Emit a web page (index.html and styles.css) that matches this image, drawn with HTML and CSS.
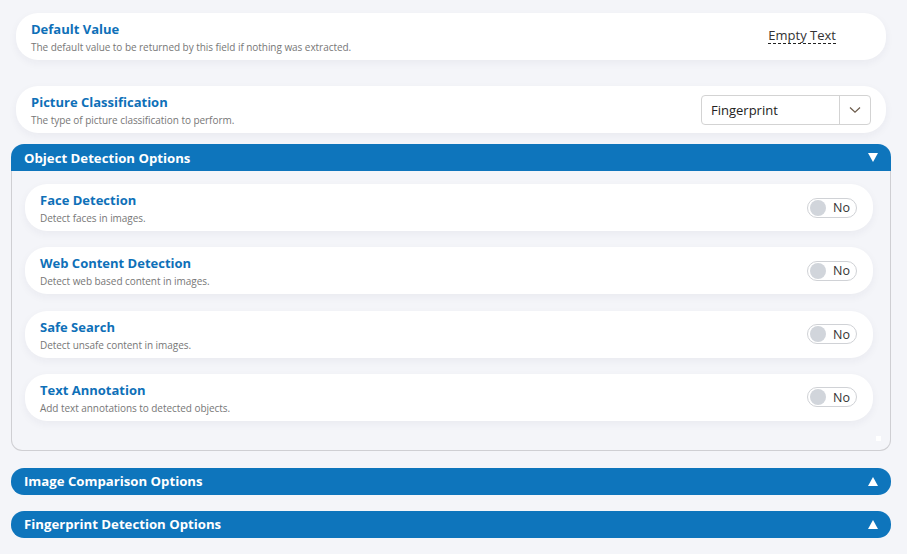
FILE: index.html
```html
<!DOCTYPE html>
<html>
<head>
<meta charset="utf-8">
<link rel="stylesheet" href="styles.css">
</head>
<body>
<div class="page">
  <div class="card top-card">
    <div class="info">
      <div class="title">Default Value</div>
      <div class="desc">The default value to be returned by this field if nothing was extracted.</div>
    </div>
    <div class="empty-text">Empty Text</div>
  </div>

  <div class="card second-card">
    <div class="info">
      <div class="title">Picture Classification</div>
      <div class="desc">The type of picture classification to perform.</div>
    </div>
    <div class="select">
      <span class="select-value">Fingerprint</span>
      <span class="select-btn">
        <svg width="12" height="8" viewBox="0 0 12 8"><path d="M1 1.5 L6 6.2 L11 1.5" fill="none" stroke="#6b5a4a" stroke-width="1.2"/></svg>
      </span>
    </div>
  </div>

  <div class="section open">
    <div class="section-head">
      <span>Object Detection Options</span>
      <span class="tri down"></span>
    </div>
    <div class="section-body">
      <div class="card inner">
        <div class="info">
          <div class="title">Face Detection</div>
          <div class="desc">Detect faces in images.</div>
        </div>
        <div class="toggle"><span class="knob"></span><span class="tlabel">No</span></div>
      </div>
      <div class="card inner">
        <div class="info">
          <div class="title">Web Content Detection</div>
          <div class="desc">Detect web based content in images.</div>
        </div>
        <div class="toggle"><span class="knob"></span><span class="tlabel">No</span></div>
      </div>
      <div class="card inner">
        <div class="info">
          <div class="title">Safe Search</div>
          <div class="desc">Detect unsafe content in images.</div>
        </div>
        <div class="toggle"><span class="knob"></span><span class="tlabel">No</span></div>
      </div>
      <div class="card inner">
        <div class="info">
          <div class="title">Text Annotation</div>
          <div class="desc">Add text annotations to detected objects.</div>
        </div>
        <div class="toggle"><span class="knob"></span><span class="tlabel">No</span></div>
      </div>
      <span class="resize-dot"></span>
    </div>
  </div>

  <div class="section closed first-closed">
    <div class="section-head">
      <span>Image Comparison Options</span>
      <span class="tri up"></span>
    </div>
  </div>

  <div class="section closed">
    <div class="section-head">
      <span>Fingerprint Detection Options</span>
      <span class="tri up"></span>
    </div>
  </div>
</div>
</body>
</html>
```

FILE: styles.css
```css
* { box-sizing: border-box; }
html, body {
  margin: 0;
  padding: 0;
  background: #f4f5f9;
  font-family: "Open Sans", "Noto Sans", "Liberation Sans", sans-serif;
}
.page {
  width: 907px;
  height: 554px;
  padding: 13px 16px 0 11px;
  display: flex;
  flex-direction: column;
  overflow: hidden;
}
.card {
  background: #ffffff;
  border-radius: 22px;
  height: 47px;
  display: flex;
  align-items: center;
  justify-content: space-between;
  box-shadow: 0 3px 8px rgba(30, 40, 80, 0.05);
}
.top-card, .second-card {
  margin: 0 5px;
  padding: 0 15px;
}
.second-card {
  margin-top: 26px;
}
.info {
  display: flex;
  flex-direction: column;
  padding-top: 2px;
}
.title {
  color: #0e70b8;
  font-weight: 700;
  font-size: 13px;
  line-height: 17px;
}
.desc {
  color: #777;
  font-size: 10px;
  line-height: 14px;
  margin-top: 2px;
  letter-spacing: -0.05px;
}
.empty-text {
  font-size: 13px;
  color: #333;
  border-bottom: 1px dashed #222;
  line-height: 16px;
  margin-right: 35px;
  margin-top: -3px;
}
.select {
  width: 170px;
  height: 30px;
  border: 1px solid #d3d3d3;
  border-radius: 4px;
  display: flex;
  align-items: stretch;
}
.select-value {
  flex: 1;
  font-size: 13px;
  color: #222;
  padding-left: 9px;
  display: flex;
  align-items: center;
}
.select-btn {
  width: 31px;
  border-left: 1px solid #d3d3d3;
  display: flex;
  align-items: center;
  justify-content: center;
}
.section {
  margin-top: 11px;
}
.section-head {
  height: 27px;
  background: #0e75bc;
  color: #fff;
  font-weight: 700;
  font-size: 13.2px;
  display: flex;
  align-items: center;
  justify-content: space-between;
  padding: 0 13px;
  border-radius: 13px;
}
.open .section-head {
  border-radius: 13px 13px 0 0;
}
.section-body {
  position: relative;
  border: 1px solid #cfcfd3;
  border-top: none;
  border-radius: 0 0 11px 11px;
  padding: 13px 17px 29px 13px;
  display: flex;
  flex-direction: column;
  gap: 16.3px;
}
.inner {
  padding: 0 15px;
}
.tri {
  width: 0;
  height: 0;
  border-left: 5px solid transparent;
  border-right: 5px solid transparent;
}
.tri.down { border-top: 9px solid #fff; }
.tri.up { border-bottom: 9px solid #fff; }
.toggle {
  width: 50px;
  height: 20px;
  border: 1px solid #d0d2d6;
  border-radius: 10px;
  display: flex;
  align-items: center;
  padding-left: 2px;
  background: #fff;
  margin-right: 1px;
}
.knob {
  width: 16px;
  height: 16px;
  border-radius: 50%;
  background: #d1d5db;
}
.tlabel {
  font-size: 12.5px;
  color: #333;
  margin-left: 7px;
}
.resize-dot {
  position: absolute;
  right: 9px;
  bottom: 9px;
  width: 5px;
  height: 5px;
  background: #fff;
}
.first-closed {
  margin-top: 17px;
}
.closed + .closed {
  margin-top: 16px;
}
```
